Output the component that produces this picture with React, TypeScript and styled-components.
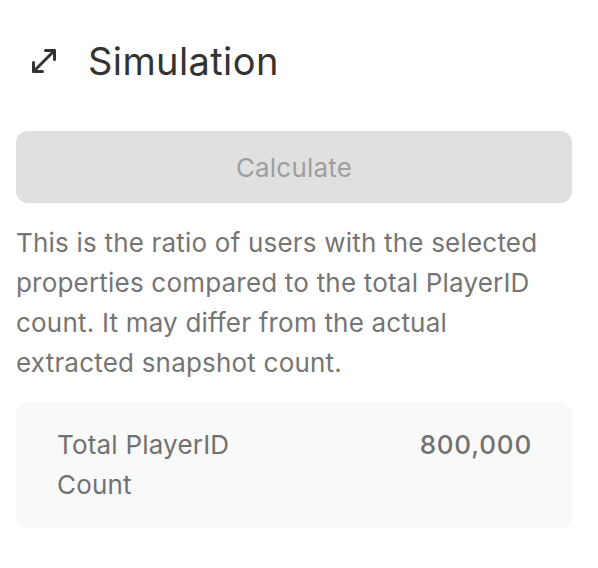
import styled, { createGlobalStyle } from "styled-components";
import { MoveDiagonal } from "lucide-react";

const GlobalStyle = createGlobalStyle`
  body {
    margin: 0;
    background: #ffffff;
    font-family: Inter, "Noto Sans", sans-serif;
    letter-spacing: 0.2px;
  }
`;

const Panel = styled.div`
  width: 556px;
  padding: 43px 26px 0 16px;
  display: flex;
  flex-direction: column;
`;

const Header = styled.div`
  display: flex;
  align-items: center;
  gap: 26px;
  padding-left: 10px;
  height: 36px;
  color: #333333;
`;

const Title = styled.h2`
  margin: 0;
  font-size: 38px;
  font-weight: 400;
  letter-spacing: 0.4px;
  color: #333333;
  line-height: 36px;
`;

const CalcButton = styled.button`
  margin-top: 52px;
  height: 72px;
  width: 100%;
  border: none;
  border-radius: 12px;
  background: #e0e0e0;
  color: #9e9e9e;
  font-family: Inter, sans-serif;
  font-size: 26px;
  letter-spacing: 0.2px;
  cursor: default;
`;

const Note = styled.p`
  margin: 20px 0 0;
  padding-right: 20px;
  font-size: 26px;
  line-height: 40px;
  color: #757575;
`;

const Card = styled.div`
  margin-top: 19px;
  background: #f9f9f9;
  border-radius: 12px;
  padding: 23px 40px 23px 41px;
  display: flex;
  justify-content: space-between;
  align-items: flex-start;
  font-size: 26px;
  line-height: 40px;
  color: #717171;
`;

const Label = styled.div`
  width: 200px;
`;

const Value = styled.div`
  font-weight: 500;
  letter-spacing: 0.8px;
  color: #717171;
`;

export default function App() {
  return (
    <>
      <GlobalStyle />
      <Panel>
        <Header>
          <MoveDiagonal size={36} strokeWidth={2} />
          <Title>Simulation</Title>
        </Header>
        <CalcButton disabled>Calculate</CalcButton>
        <Note>
          This is the ratio of users with the selected properties compared to
          the total PlayerID count. It may differ from the actual extracted
          snapshot count.
        </Note>
        <Card>
          <Label>Total PlayerID Count</Label>
          <Value>800,000</Value>
        </Card>
      </Panel>
    </>
  );
}
